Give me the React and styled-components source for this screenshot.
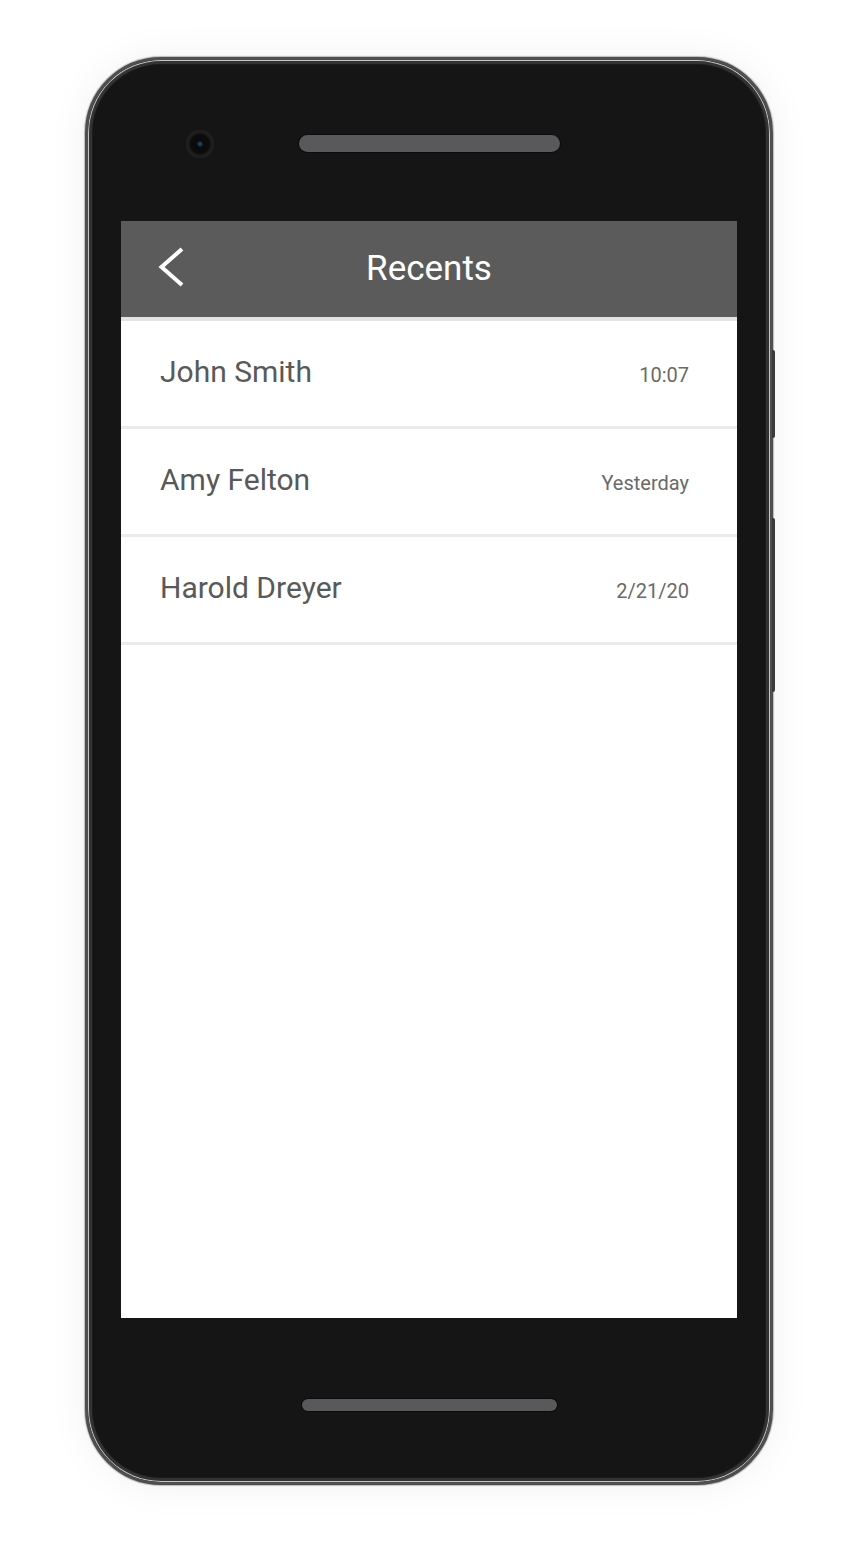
import React from 'react';
import styled, { createGlobalStyle } from 'styled-components';

const GlobalStyle = createGlobalStyle`
  html, body {
    margin: 0;
    padding: 0;
    background: #ffffff;
  }
  body {
    font-family: Roboto, 'Noto Sans', Arial, sans-serif;
  }
`;

const Stage = styled.div`
  width: 868px;
  height: 1548px;
  display: flex;
  justify-content: flex-start;
  align-items: flex-start;
  padding: 57px 0 0 85px;
  box-sizing: border-box;
`;

const Phone = styled.div`
  position: relative;
  width: 688px;
  height: 1428px;
  box-sizing: border-box;
  border: 3px solid #4f4f4f;
  border-radius: 76px;
  background: #151515;
  box-shadow: inset 0 0 0 1px #c4c4c4, inset 0 0 0 4px #333333,
    inset 0 0 0 5px #1b1b1b, 0 0 1px 1px rgba(0, 0, 0, 0.25),
    0 0 40px rgba(0, 0, 0, 0.06);
  display: flex;
  flex-direction: column;
`;

const SideButton = styled.div`
  position: absolute;
  right: -5px;
  top: ${(p) => p.top}px;
  width: 3px;
  height: ${(p) => p.length}px;
  background: #3a3a3a;
  border-radius: 0 2px 2px 0;
`;

const TopBezel = styled.div`
  height: 161px;
  box-sizing: border-box;
  padding: 6px 33px 0;
  display: grid;
  grid-template-columns: 1fr 261px 1fr;
  align-items: center;
`;

const Camera = styled.div`
  width: 26px;
  height: 26px;
  margin-left: 66px;
  border-radius: 50%;
  background: radial-gradient(circle at 50% 50%, #1f3a55 0 2px, #0b0b0c 3px 9px, #202022 12px);
  box-shadow: 0 0 0 1px #222;
`;

const Speaker = styled.div`
  width: ${(p) => p.width}px;
  height: ${(p) => p.height}px;
  justify-self: center;
  border-radius: 10px;
  background: #59595b;
  box-shadow: 0 0 0 1px #0c0c0c;
`;

const Screen = styled.div`
  margin: 0 33px;
  height: 1097px;
  background: #ffffff;
  display: flex;
  flex-direction: column;
`;

const Header = styled.header`
  height: 96px;
  flex-shrink: 0;
  background: #5b5b5b;
  border-bottom: 4px solid #e3e3e3;
  display: grid;
  grid-template-columns: 1fr auto 1fr;
  align-items: center;
`;

const BackButton = styled.button`
  justify-self: start;
  margin: 0 0 4px 36px;
  padding: 0;
  border: none;
  background: none;
  display: flex;
  cursor: pointer;
`;

const Title = styled.h1`
  margin: 0 0 2px;
  font-size: 35px;
  font-weight: 400;
  color: #ffffff;
`;

const List = styled.ul`
  margin: 0;
  padding: 0;
  list-style: none;
`;

const Row = styled.li`
  height: 105px;
  box-sizing: content-box;
  border-bottom: 3px solid #ebebeb;
  padding: 0 48px 0 39px;
  display: flex;
  align-items: baseline;
  justify-content: space-between;
`;

const Name = styled.span`
  font-size: 30px;
  color: #595959;
  line-height: 1;
  padding-top: 36px;
`;

const Time = styled.span`
  font-size: 20px;
  color: #6a6a6a;
  line-height: 1;
`;

const BottomBezel = styled.div`
  height: 164px;
  box-sizing: border-box;
  padding-top: 10px;
  display: flex;
  justify-content: center;
  align-items: center;
`;

const recents = [
  { name: 'John Smith', time: '10:07' },
  { name: 'Amy Felton', time: 'Yesterday' },
  { name: 'Harold Dreyer', time: '2/21/20' },
];

const ChevronLeft = () => (
  <svg width="28" height="42" viewBox="0 0 28 42">
    <polyline
      points="25,3 4.5,21 25,39"
      fill="none"
      stroke="#ffffff"
      strokeWidth="4"
      strokeLinejoin="miter"
    />
  </svg>
);

const App = () => {
  return (
    <Stage>
      <GlobalStyle />
      <Phone>
        <SideButton top={290} length={88} />
        <SideButton top={458} length={174} />
        <TopBezel>
          <Camera />
          <Speaker width={261} height={17} />
          <div />
        </TopBezel>
        <Screen>
          <Header>
            <BackButton aria-label="Back">
              <ChevronLeft />
            </BackButton>
            <Title>Recents</Title>
            <div />
          </Header>
          <List>
            {recents.map((item) => (
              <Row key={item.name}>
                <Name>{item.name}</Name>
                <Time>{item.time}</Time>
              </Row>
            ))}
          </List>
        </Screen>
        <BottomBezel>
          <Speaker width={255} height={12} />
        </BottomBezel>
      </Phone>
    </Stage>
  );
};

export default App;
